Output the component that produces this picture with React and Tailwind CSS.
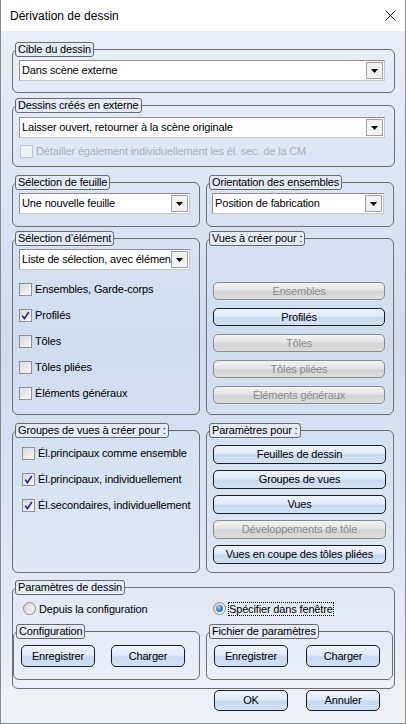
import React from "react";

const GroupBox = ({ label, className = "", boxClass = "", children }) => {
  return (
    <div className={`relative pt-[7px] ${className}`}>
      <div className={`h-full rounded-[6px] border border-[#6e6e6e] ${boxClass}`}>{children}</div>
      <span className="absolute left-[3px] top-0 h-[15px] whitespace-nowrap rounded-[3px] border border-[#6a6a6a] bg-[#e4ebf6] px-[2px] leading-[13px]">
        {label}
      </span>
    </div>
  );
};

const Combo = ({ value, className = "" }) => {
  return (
    <div className={`flex h-[21px] items-center border border-[#8f8f8f] border-b-[#c9c9c9] border-r-[#c9c9c9] bg-white ${className}`}>
      <span className="flex-1 overflow-hidden whitespace-nowrap pl-[2px]">{value}</span>
      <span className="mr-[1px] flex h-[17px] w-[17px] shrink-0 items-center justify-center border border-[#a3a3a3] bg-[#f1f1f1]">
        <svg width="7" height="4" viewBox="0 0 7 4">
          <path d="M0 0 H7 L3.5 4 Z" fill="#000" />
        </svg>
      </span>
    </div>
  );
};

const Check = ({ label, checked, disabled, className = "" }) => {
  return (
    <div className={`flex h-[13px] items-center gap-[3px] ${className}`}>
      <span
        className={`flex h-[13px] w-[13px] shrink-0 items-center justify-center border ${
          disabled
            ? "border-[#c4c8ce] bg-[#eef1f5]"
            : "border-[#8e8f8f] bg-[linear-gradient(135deg,#d9d9d9,#f7f7f7)]"
        }`}
      >
        {checked && (
          <svg width="9" height="9" viewBox="0 0 9 9">
            <path d="M1.2 4.6 L3.4 7.6 L7.8 1" fill="none" stroke="#1e1ea0" strokeWidth="1.6" />
          </svg>
        )}
      </span>
      <span className={`whitespace-nowrap ${disabled ? "text-[#a9b0ba]" : ""}`}>{label}</span>
    </div>
  );
};

const Btn = ({ children, disabled, className = "" }) => {
  return (
    <div
      className={`flex items-center justify-center whitespace-nowrap rounded-[5px] border ${
        disabled
          ? "border-[#8a8a8a] bg-[linear-gradient(to_bottom,#f3f3f3_0%,#e4e4e4_45%,#d3d3d3_55%,#dcdcdc_100%)] text-[#8c8c8c]"
          : "border-[#1c1c1c] bg-[linear-gradient(to_bottom,#eef4fc_0%,#dfe9f7_45%,#c6d9f0_55%,#d3e2f4_100%)]"
      } ${className}`}
    >
      {children}
    </div>
  );
};

const Radio = ({ label, selected, focus, className = "" }) => {
  return (
    <div className={`flex h-[13px] items-center gap-[3px] ${className}`}>
      <span className="flex h-[13px] w-[13px] shrink-0 items-center justify-center rounded-full border border-[#8e8f8f] bg-[linear-gradient(135deg,#d4d4d4,#f8f8f8)]">
        {selected && (
          <span className="h-[7px] w-[7px] rounded-full bg-[radial-gradient(circle_at_40%_35%,#9fd0f5_0%,#3d86cc_50%,#1b4f8e_100%)]" />
        )}
      </span>
      <span className={`whitespace-nowrap leading-[12px] ${focus ? "outline outline-1 outline-dotted outline-black" : ""}`}>
        {label}
      </span>
    </div>
  );
};

export default function App() {
  return (
    <div className="flex h-[724px] w-[406px] flex-col border-x border-b border-[#8a8a8a] font-['Liberation_Sans',Arial,sans-serif] text-[11px] tracking-[-0.15px] text-black">
      {/* title bar */}
      <div className="flex h-[31px] shrink-0 items-center justify-between bg-white pl-[9px] pr-[9px]">
        <span className="text-[12px] tracking-normal">Dérivation de dessin</span>
        <svg width="11" height="11" viewBox="0 0 11 11">
          <path d="M0.5 0.5 L10.5 10.5 M10.5 0.5 L0.5 10.5" stroke="#111" strokeWidth="1" />
        </svg>
      </div>

      <div className="flex flex-1 flex-col bg-[linear-gradient(to_bottom,#e9eff8_0%,#d6e2f1_30%,#cfdcee_45%,#dae4f2_70%,#eef2fa_100%)] pl-[11px] pr-[10px] pt-[11px]">
        <GroupBox label="Cible du dessin" boxClass="pt-[10px] pb-[11px] pl-[6px] pr-[9px]">
          <Combo value="Dans scène externe" />
        </GroupBox>

        <GroupBox label="Dessins créés en externe" className="mt-[5px]" boxClass="pt-[11px] pb-[8px] pl-[6px] pr-[9px]">
          <Combo value="Laisser ouvert, retourner à la scène originale" />
          <Check
            className="ml-[1px] mt-[7px]"
            disabled
            label="Détailler également individuellement les él. sec. de la CM"
          />
        </GroupBox>

        <div className="mt-[8px] flex gap-[6px]">
          <GroupBox label="Sélection de feuille" className="w-[188px]" boxClass="pt-[10px] pb-[12px] pl-[6px] pr-[9px]">
            <Combo value="Une nouvelle feuille" />
          </GroupBox>
          <GroupBox label="Orientation des ensembles" className="w-[188px]" boxClass="pt-[10px] pb-[12px] pl-[5px] pr-[9px]">
            <Combo value="Position de fabrication" />
          </GroupBox>
        </div>

        <div className="mt-[4px] flex gap-[6px]">
          <GroupBox label="Sélection d’élément" className="w-[188px]" boxClass="pt-[10px] pb-[14px] pl-[6px] pr-[9px]">
            <Combo value="Liste de sélection, avec élémen" />
            <div className="mt-[13px] flex flex-col gap-[13px]">
              <Check label="Ensembles, Garde-corps" />
              <Check label="Profilés" checked />
              <Check label="Tôles" />
              <Check label="Tôles pliées" />
              <Check label="Éléments généraux" />
            </div>
          </GroupBox>
          <GroupBox label="Vues à créer pour :" className="w-[188px]" boxClass="pt-[43px] pb-[10px] pl-[6px] pr-[8px]">
            <div className="flex flex-col gap-[8px]">
              <Btn disabled className="h-[18px]">Ensembles</Btn>
              <Btn className="h-[18px]">Profilés</Btn>
              <Btn disabled className="h-[18px]">Tôles</Btn>
              <Btn disabled className="h-[18px]">Tôles pliées</Btn>
              <Btn disabled className="h-[18px]">Éléments généraux</Btn>
            </div>
          </GroupBox>
        </div>

        <div className="mt-[8px] flex gap-[6px]">
          <GroupBox label="Groupes de vues à créer pour :" className="w-[188px]" boxClass="pt-[16px] pl-[9px] pr-[6px]">
            <div className="flex flex-col gap-[13px]">
              <Check label="Él.principaux comme ensemble" />
              <Check label="Él.principaux, individuellement" checked />
              <Check label="Él.secondaires, individuellement" checked />
            </div>
          </GroupBox>
          <GroupBox label="Paramètres pour :" className="w-[188px]" boxClass="pt-[14px] pb-[8px] pl-[6px] pr-[7px]">
            <div className="flex flex-col gap-[6px]">
              <Btn className="h-[19px]">Feuilles de dessin</Btn>
              <Btn className="h-[19px]">Groupes de vues</Btn>
              <Btn className="h-[19px]">Vues</Btn>
              <Btn disabled className="h-[19px]">Développements de tôle</Btn>
              <Btn className="h-[19px]">Vues en coupe des tôles pliées</Btn>
            </div>
          </GroupBox>
        </div>

        <GroupBox label="Paramètres de dessin" className="mt-[7px]" boxClass="pt-[14px] pb-[8px]">
          <div className="flex gap-[6px]">
            <div className="w-[187px] pl-[10px]">
              <Radio label="Depuis la configuration" />
            </div>
            <div className="w-[187px] pl-[7px]">
              <Radio label="Spécifier dans fenêtre" selected focus />
            </div>
          </div>
          <div className="mt-[9px] flex gap-[6px]">
            <GroupBox label="Configuration" className="w-[187px]" boxClass="pt-[13px] pb-[12px] pl-[7px]">
              <div className="flex gap-[16px]">
                <Btn className="h-[22px] w-[74px]">Enregistrer</Btn>
                <Btn className="h-[22px] w-[74px]">Charger</Btn>
              </div>
            </GroupBox>
            <GroupBox label="Fichier de paramètres" className="w-[187px]" boxClass="pt-[13px] pb-[12px] pl-[7px]">
              <div className="flex gap-[18px]">
                <Btn className="h-[22px] w-[74px]">Enregistrer</Btn>
                <Btn className="h-[22px] w-[74px]">Charger</Btn>
              </div>
            </GroupBox>
          </div>
        </GroupBox>

        <div className="mt-[1px] flex gap-[18px] pl-[202px]">
          <Btn className="h-[21px] w-[74px]">OK</Btn>
          <Btn className="h-[21px] w-[74px]">Annuler</Btn>
        </div>
      </div>
    </div>
  );
}
